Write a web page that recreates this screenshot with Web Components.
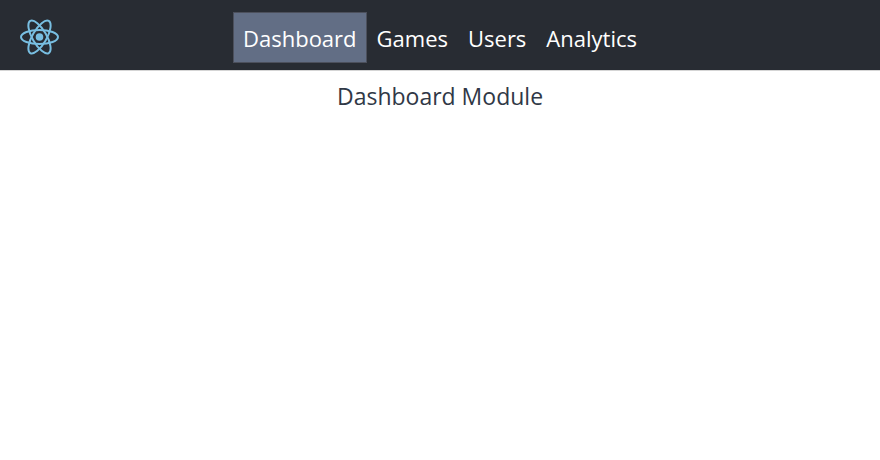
<!DOCTYPE html>
<html lang="en">
<head>
<meta charset="utf-8">
<title>Dashboard</title>
<style>
body { margin: 0; background: #fff; color: #303846; font: 22px/30px "Open Sans", "Noto Sans", sans-serif; }
</style>
</head>
<body>
<app-shell></app-shell>
<script>
class AppLogo extends HTMLElement {
  constructor() {
    super();
    this.attachShadow({ mode: "open" }).innerHTML = `
      <style>
        :host { display: block; width: 39px; height: 37px; }
        svg { display: block; width: 100%; height: 100%; }
      </style>
      <svg viewBox="-19.5 -18 39 37" role="img" aria-label="React" fill="none" stroke="#78bee1" stroke-width="2">
        <ellipse rx="18.5" ry="7.1"/>
        <ellipse rx="18.5" ry="7.1" transform="rotate(60)"/>
        <ellipse rx="18.5" ry="7.1" transform="rotate(120)"/>
        <circle r="3.8" fill="#78bee1" stroke="none"/>
      </svg>`;
  }
}
customElements.define("app-logo", AppLogo);

class NavItem extends HTMLElement {
  constructor() {
    super();
    this.attachShadow({ mode: "open" }).innerHTML = `
      <style>
        :host { display: block; }
        a { display: block; padding: 10px 9px 9px; border: 1px solid transparent; color: #fff; text-decoration: none; white-space: nowrap; }
        :host([active]) a { background: #626e85; border-color: #4c505c; }
      </style>
      <a href="#"><slot></slot></a>`;
  }
}
customElements.define("nav-item", NavItem);

class AppHeader extends HTMLElement {
  constructor() {
    super();
    this.attachShadow({ mode: "open" }).innerHTML = `
      <style>
        :host { display: grid; grid-template-columns: 1fr auto 1fr; align-items: center; padding: 12px 20px 7px; background: #282c33; border-bottom: 1px solid #d5d5d5; }
        nav { display: flex; }
      </style>
      <app-logo></app-logo>
      <nav><slot></slot></nav>`;
  }
}
customElements.define("app-header", AppHeader);

class AppShell extends HTMLElement {
  constructor() {
    super();
    this.attachShadow({ mode: "open" }).innerHTML = `
      <style>
        :host { display: block; }
        main { padding: 10px; text-align: center; font-size: 23px; }
      </style>
      <app-header>
        <nav-item active>Dashboard</nav-item>
        <nav-item>Games</nav-item>
        <nav-item>Users</nav-item>
        <nav-item>Analytics</nav-item>
      </app-header>
      <main>Dashboard Module</main>`;
  }
}
customElements.define("app-shell", AppShell);
</script>
</body>
</html>
